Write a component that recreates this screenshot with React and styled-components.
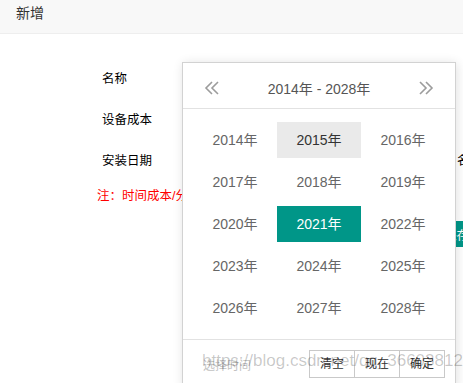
import styled, { createGlobalStyle } from 'styled-components';

const GlobalStyle = createGlobalStyle`
  body {
    margin: 0;
    background: #fff;
    overflow: hidden;
    font-family: "Liberation Sans", "Noto Sans CJK SC", sans-serif;
  }
`;

const Page = styled.div`
  position: relative;
  width: 463px;
  height: 383px;
  overflow: hidden;
`;
const TopBar = styled.header`
  height: 33px;
  padding-left: 16px;
  line-height: 27px;
  font-size: 14px;
  color: #333;
  background: #f8f8f8;
  border-bottom: 1px solid #eee;
`;
const Form = styled.section`
  padding-top: 23px;
`;
const Row = styled.div`
  display: grid;
  grid-template-columns: 355px auto;
  align-items: center;
  height: 41px;
  padding-left: 102px;
  font-size: 12.5px;
  color: #000;
  white-space: nowrap;
`;
const Note = styled.p`
  margin: 8px 0 0;
  padding-left: 97px;
  font-size: 12.5px;
  line-height: 16px;
  color: #f00;
  white-space: nowrap;
`;
const SaveRow = styled.div`
  padding: 17px 0 0 430px;
  white-space: nowrap;
`;
const SaveButton = styled.button`
  height: 26px;
  padding: 0 14px;
  border: 0;
  background: #009688;
  color: #fff;
  font: 12.5px "Liberation Sans", "Noto Sans CJK SC", sans-serif;
`;

const Picker = styled.div`
  position: absolute;
  left: 182px;
  top: 62px;
  width: 272px;
  background: #fff;
  border: 1px solid #d2d2d2;
  box-shadow: 1px 1px 10px rgba(0, 0, 0, 0.12);
  font-size: 14px;
`;
const PickerHead = styled.div`
  display: flex;
  align-items: center;
  justify-content: space-between;
  height: 30px;
  padding: 10px 21px 5px;
  border-bottom: 1px solid #e2e2e2;
  color: #555;
`;
const Arrow = styled.svg`
  width: 16px;
  height: 14px;
  fill: none;
  stroke: #9c9c9c;
  stroke-width: 1.6;
  transform: ${(p) => (p.$flip ? 'scaleX(-1)' : 'none')};
`;
const YearGrid = styled.ul`
  display: grid;
  grid-template-columns: repeat(3, 84px);
  grid-auto-rows: 36px;
  row-gap: 6px;
  margin: 0;
  padding: 13px 10px;
  list-style: none;
`;
const Year = styled.li`
  line-height: 36px;
  text-align: center;
  color: ${(p) => (p.$active ? '#fff' : p.$hover ? '#333' : '#666')};
  background: ${(p) => (p.$active ? '#009688' : p.$hover ? '#eaeaea' : 'transparent')};
`;
const PickerFoot = styled.div`
  position: relative;
  display: flex;
  align-items: center;
  justify-content: space-between;
  padding: 10px 10px 10px 20px;
  border-top: 1px solid #e2e2e2;
`;
const Hint = styled.span`
  font-size: 12px;
  color: #c2c2c2;
`;
const BtnGroup = styled.div`
  display: flex;
`;
const FootBtn = styled.span`
  height: 26px;
  padding: 0 10px;
  line-height: 26px;
  font-size: 12px;
  color: #333;
  background: #fff;
  border: 1px solid #c9c9c9;
  & + & {
    margin-left: -1px;
  }
`;
const Watermark = styled.span`
  position: absolute;
  left: 19px;
  top: 11px;
  font: 17px "Liberation Sans", sans-serif;
  color: rgba(0, 0, 0, 0.22);
  white-space: nowrap;
  pointer-events: none;
`;

const years = [2014, 2015, 2016, 2017, 2018, 2019, 2020, 2021, 2022, 2023, 2024, 2025, 2026, 2027, 2028];

function DoubleArrow({ flip }) {
  return (
    <Arrow $flip={flip} viewBox="0 0 16 14">
      <path d="M8 1 L2 7 L8 13 M14 1 L8 7 L14 13" />
    </Arrow>
  );
}

export default function App() {
  return (
    <Page>
      <GlobalStyle />
      <TopBar>新增</TopBar>
      <Form>
        <Row>
          <span>名称</span>
        </Row>
        <Row>
          <span>设备成本</span>
        </Row>
        <Row>
          <span>安装日期</span>
          <span>名称</span>
        </Row>
        <Note>注：时间成本/分钟，设备成本/元</Note>
        <SaveRow>
          <SaveButton>保存</SaveButton>
        </SaveRow>
      </Form>

      <Picker>
        <PickerHead>
          <DoubleArrow />
          <span>2014年 - 2028年</span>
          <DoubleArrow flip />
        </PickerHead>
        <YearGrid>
          {years.map((y) => (
            <Year key={y} $active={y === 2021} $hover={y === 2015}>
              {y}年
            </Year>
          ))}
        </YearGrid>
        <PickerFoot>
          <Hint>选择时间</Hint>
          <BtnGroup>
            <FootBtn>清空</FootBtn>
            <FootBtn>现在</FootBtn>
            <FootBtn>确定</FootBtn>
          </BtnGroup>
          <Watermark>https://blog.csdn.net/qq_36603812</Watermark>
        </PickerFoot>
      </Picker>
    </Page>
  );
}
